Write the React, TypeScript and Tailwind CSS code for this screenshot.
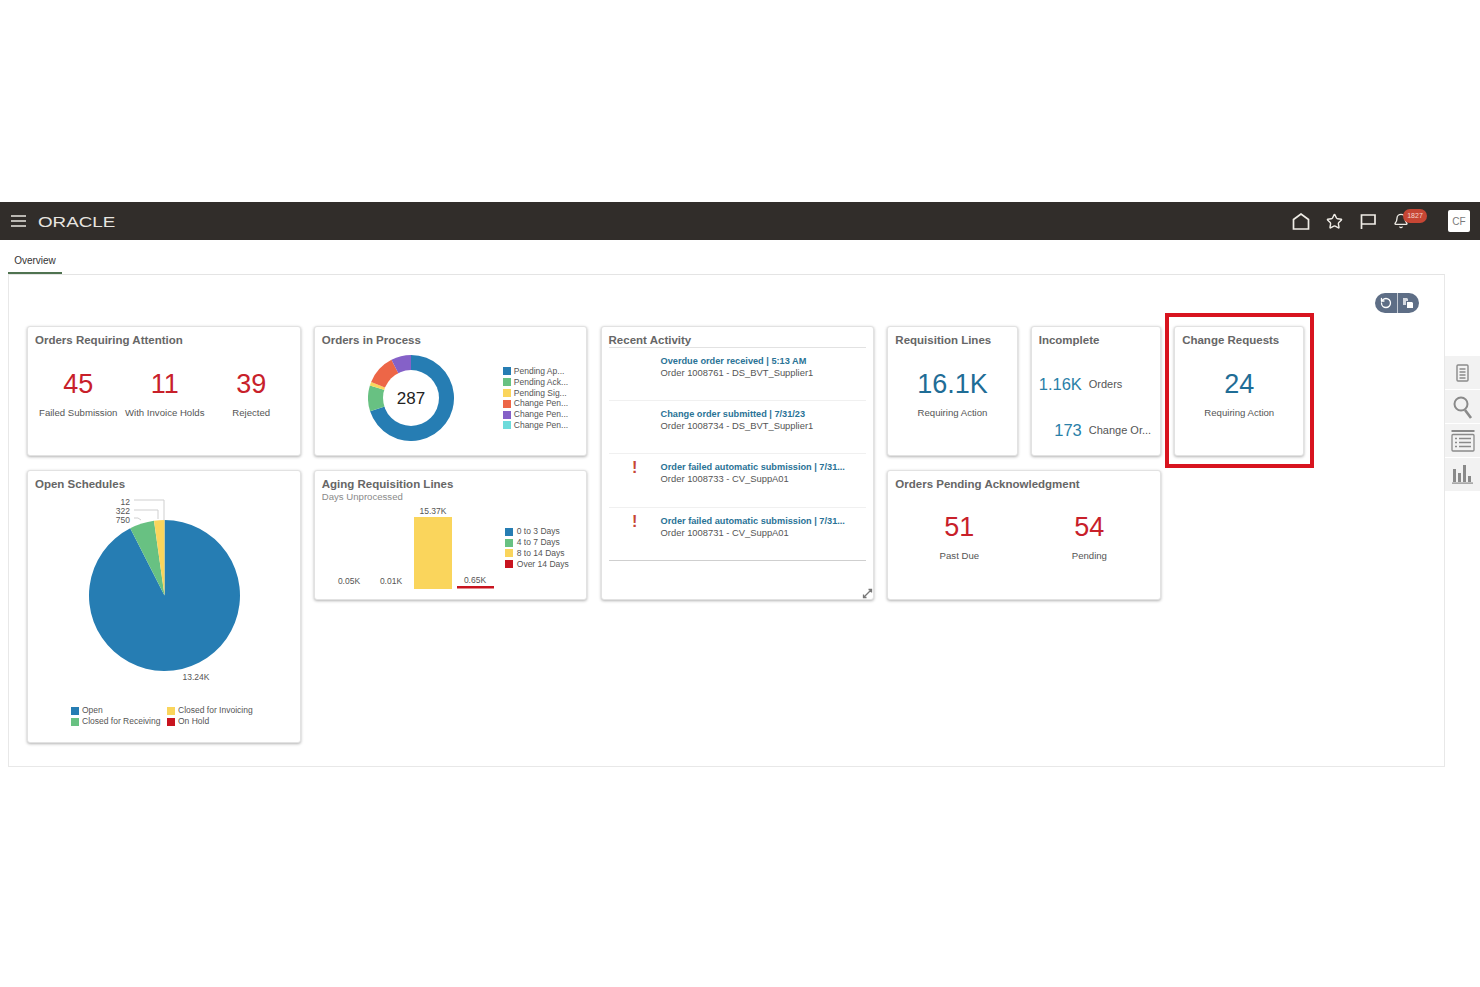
import React from "react";
import { Star, Bell, RotateCw } from "lucide-react";

function polar(cx: number, cy: number, r: number, a: number) {
  const t = ((a - 90) * Math.PI) / 180;
  return [cx + r * Math.cos(t), cy + r * Math.sin(t)];
}
function sector(cx: number, cy: number, r: number, a0: number, a1: number) {
  const [x0, y0] = polar(cx, cy, r, a0);
  const [x1, y1] = polar(cx, cy, r, a1);
  const large = a1 - a0 > 180 ? 1 : 0;
  return `M${cx} ${cy}L${x0} ${y0}A${r} ${r} 0 ${large} 1 ${x1} ${y1}Z`;
}

function Card({ title, subtitle, className, children }: { title: string; subtitle?: string; className?: string; children?: React.ReactNode }) {
  return (
    <div className={`flex flex-col rounded-[3px] border border-[#e2e2e2] bg-white shadow-[0_1px_3px_rgba(0,0,0,0.3)] ${className ?? ""}`}>
      <div className="whitespace-nowrap px-[7px] pt-[6px] text-[11.5px] font-bold leading-[14px] text-[#666666]">{title}</div>
      {subtitle && <div className="mt-[1px] px-[7px] text-[9.6px] leading-[10px] text-[#8a8a8a]">{subtitle}</div>}
      {children}
    </div>
  );
}

function Metric({ value, label, tone }: { value: string; label: string; tone: string }) {
  return (
    <div className="flex flex-col items-center">
      <div className={`text-[27px] leading-[32px] ${tone}`}>{value}</div>
      <div className="mt-[7px] whitespace-nowrap text-[9.6px] leading-[12px] text-[#555555]">{label}</div>
    </div>
  );
}

function Legend({ items, className, gap }: { items: [string, string][]; className?: string; gap?: string }) {
  return (
    <div className={`flex flex-col ${className ?? ""}`}>
      {items.map(([c, t], i) => (
        <div key={i} className={`flex h-[10.8px] items-center text-[8.5px] leading-[11px] text-[#555555] ${gap ?? "gap-[3px]"}`}>
          <span className="h-[8px] w-[8px] shrink-0" style={{ backgroundColor: c }} />
          <span className="whitespace-nowrap">{t}</span>
        </div>
      ))}
    </div>
  );
}

function Activity({ title, sub, alert, last }: { title: string; sub: string; alert?: boolean; last?: boolean }) {
  return (
    <div className={`flex h-[53.2px] border-b ${last ? "border-[#cfcfcf]" : "border-[#f0f0f0]"}`}>
      <div className="w-[52px] pt-[6px] text-center text-[16px] font-bold leading-[16px] text-[#c74634]">{alert ? "!" : ""}</div>
      <div className="pt-[7px]">
        <div className="whitespace-nowrap text-[9.2px] font-bold leading-[12px] text-[#2a7396]">{title}</div>
        <div className="whitespace-nowrap text-[9.4px] leading-[12px] text-[#555555]">{sub}</div>
      </div>
    </div>
  );
}

const BLUE = "#267db3";
const GREEN = "#68c182";
const YELLOW = "#fad55c";
const ORANGE = "#ed6647";
const PURPLE = "#8561c8";
const TEAL = "#6ddbdb";
const RED = "#c8141f";

export default function App() {
  return (
    <div className="min-h-[987px] bg-white pt-[202px] font-['Liberation_Sans',Arial,sans-serif]">
      <header className="flex h-[38px] items-center bg-[#312d2a] text-[#f0ede8]">
        <svg width="16" height="12" viewBox="0 0 16 12" className="ml-[11px]" stroke="#e8e5e0" strokeWidth="1.4">
          <path d="M0 1h15M0 6h15M0 11h15" />
        </svg>
        <span className="ml-[11px] mt-[1px] w-[57px] origin-left scale-x-[1.34] text-[14px] leading-[14px] text-[#e8e5e0]">ORACLE</span>
        <div className="ml-auto flex items-center">
          <svg width="18" height="17" viewBox="0 0 18 17" fill="none" stroke="#efece6" strokeWidth="1.7">
            <path d="M1.5 16V6.5L9 1l7.5 5.5V16Z" />
          </svg>
          <Star size={17} strokeWidth={2} className="ml-[16px]" color="#efece6" />
          <svg width="16" height="15" viewBox="0 0 16 15" fill="none" stroke="#efece6" strokeWidth="1.7" className="ml-[17px]">
            <path d="M1.5 15V1h13.5v9H1.5" />
          </svg>
          <div className="relative ml-[17px] h-[16px] w-[16px]">
            <Bell size={16} strokeWidth={2} color="#efece6" />
            <span className="absolute left-[10px] top-[-4px] flex h-[14px] w-[24px] items-center justify-center rounded-[7px] bg-[#c74634] text-[7px] leading-[8px] text-[#f5d5cc]">1827</span>
          </div>
          <div className="ml-[39px] mr-[10px] flex h-[22px] w-[22px] items-center justify-center rounded-[2px] bg-white text-[10px] text-[#7a7a7a]">CF</div>
        </div>
      </header>

      <div className="flex h-[34px] items-stretch pl-[8px]">
        <div className="flex w-[54px] items-center justify-center border-b-2 border-[#4f7350] pt-[10px] text-[10px] leading-[12px] text-[#333333]">Overview</div>
      </div>

      <div className="flex items-start">
        <main className="ml-[8px] h-[493px] w-[1437px] border border-[#e8e8e8] border-t-[#e4e4e4] pl-[18px] pt-[18px]">
          <div className="mr-[25px] flex justify-end">
            <div className="flex h-[20px] w-[44px] overflow-hidden rounded-[10px] bg-[#5e6e86]">
              <div className="flex flex-1 items-center justify-center border-r border-[#c5cbd4]">
                <RotateCw size={12} strokeWidth={2.6} color="#ffffff" className="-scale-x-100" />
              </div>
              <div className="flex flex-1 items-center justify-center">
                <svg width="12" height="12" viewBox="0 0 12 12" fill="#ffffff">
                  <path d="M1 1h4l1 1v2H4v4H1Z" opacity="0.75" />
                  <path d="M5 5h5l1 1v5H5Z" />
                </svg>
              </div>
            </div>
          </div>

          <div className="relative mt-[13px] grid grid-cols-[repeat(9,130.3px)] grid-rows-[130px_130px_130px] gap-x-[13.1px] gap-y-[13.5px]">
            <Card title="Orders Requiring Attention" className="col-span-2">
              <div className="mt-[21px] grid grid-cols-[repeat(3,86.5px)] px-[7px]">
                <Metric value="45" label="Failed Submission" tone="text-[#c8202a]" />
                <Metric value="11" label="With Invoice Holds" tone="text-[#c8202a]" />
                <Metric value="39" label="Rejected" tone="text-[#c8202a]" />
              </div>
            </Card>

            <Card title="Orders in Process" className="col-span-2">
              <div className="mt-[8px] flex pl-[53px]">
                <svg width="86" height="86" viewBox="0 0 86 86" className="shrink-0">
                  <path d={sector(43, 43, 43, 0, 252)} fill={BLUE} />
                  <path d={sector(43, 43, 43, 252, 287)} fill={GREEN} />
                  <path d={sector(43, 43, 43, 287, 292)} fill={YELLOW} />
                  <path d={sector(43, 43, 43, 292, 333)} fill={ORANGE} />
                  <path d={sector(43, 43, 43, 333, 360)} fill={PURPLE} />
                  <circle cx="43" cy="43" r="28" fill="#ffffff" />
                  <text x="43" y="49" textAnchor="middle" fontSize="17" fill="#222222">287</text>
                </svg>
                <Legend
                  className="ml-[49px] mt-[11px]"
                  items={[
                    [BLUE, "Pending Ap..."],
                    [GREEN, "Pending Ack..."],
                    [YELLOW, "Pending Sig..."],
                    [ORANGE, "Change Pen..."],
                    [PURPLE, "Change Pen..."],
                    [TEAL, "Change Pen..."],
                  ]}
                />
              </div>
            </Card>

            <Card title="Recent Activity" className="col-span-2 row-span-2">
              <div className="relative mx-[7px] flex flex-1 flex-col border-t border-[#e2e2e2]">
                <Activity title="Overdue order received | 5:13 AM" sub="Order 1008761 - DS_BVT_Supplier1" />
                <Activity title="Change order submitted | 7/31/23" sub="Order 1008734 - DS_BVT_Supplier1" />
                <Activity alert title="Order failed automatic submission | 7/31..." sub="Order 1008733 - CV_SuppA01" />
                <Activity alert last title="Order failed automatic submission | 7/31..." sub="Order 1008731 - CV_SuppA01" />
                <svg width="11" height="11" viewBox="0 0 11 11" fill="none" stroke="#777777" strokeWidth="1.3" className="absolute bottom-[0px] right-[-7px]">
                  <path d="M1.5 9.5l8-8M6.5 1.5h3v3M1.5 6.5v3h3" />
                </svg>
              </div>
            </Card>

            <Card title="Requisition Lines">
              <div className="mt-[21px]">
                <Metric value="16.1K" label="Requiring Action" tone="text-[#1f6d96]" />
              </div>
            </Card>

            <Card title="Incomplete">
              <div className="mt-[21px] grid grid-cols-[43px_auto] items-center gap-x-[7px] gap-y-[24px] pl-[7px] pt-[5px]">
                <div className="text-right text-[16.5px] leading-[22px] text-[#2a7fa8]">1.16K</div>
                <div className="text-[11px] text-[#555555]">Orders</div>
                <div className="text-right text-[16.5px] leading-[22px] text-[#2a7fa8]">173</div>
                <div className="whitespace-nowrap text-[11px] text-[#555555]">Change Or...</div>
              </div>
            </Card>

            <Card title="Change Requests">
              <div className="mt-[21px]">
                <Metric value="24" label="Requiring Action" tone="text-[#1f6d96]" />
              </div>
            </Card>

            <Card title="Open Schedules" className="col-span-2 row-span-2">
              <svg viewBox="28 491 272 195" width="272" height="195" className="block">
                <path d={sector(164.5, 595.5, 75.5, 0, 333)} fill={BLUE} />
                <path d={sector(164.5, 595.5, 75.5, 333, 352)} fill={GREEN} />
                <path d={sector(164.5, 595.5, 75.5, 352, 360)} fill={YELLOW} />
                <path d="M134 518h4l3 2M134 510h24v9M134 500h30v20" fill="none" stroke="#cfcfcf" strokeWidth="1" />
                <text x="130" y="504.5" textAnchor="end" fontSize="8.5" fill="#555555">12</text>
                <text x="130" y="513.5" textAnchor="end" fontSize="8.5" fill="#555555">322</text>
                <text x="130" y="522.5" textAnchor="end" fontSize="8.5" fill="#555555">750</text>
                <text x="196" y="680" textAnchor="middle" fontSize="8.5" fill="#555555">13.24K</text>
              </svg>
              <div className="mt-[20px] grid grid-cols-[96px_auto] pl-[43px]">
                <Legend items={[[BLUE, "Open"], [GREEN, "Closed for Receiving"]]} />
                <Legend items={[[YELLOW, "Closed for Invoicing"], [RED, "On Hold"]]} />
              </div>
            </Card>

            <Card title="Aging Requisition Lines" subtitle="Days Unprocessed" className="col-span-2">
              <div className="flex">
                <svg viewBox="315 502 180 91" width="180" height="91" className="block shrink-0">
                  <rect x="414" y="517" width="38" height="72" fill={YELLOW} />
                  <rect x="457" y="586" width="37" height="2.5" fill={RED} />
                  <text x="433" y="514" textAnchor="middle" fontSize="8.5" fill="#555555">15.37K</text>
                  <text x="349" y="584" textAnchor="middle" fontSize="8.5" fill="#555555">0.05K</text>
                  <text x="391" y="584" textAnchor="middle" fontSize="8.5" fill="#555555">0.01K</text>
                  <text x="475" y="583" textAnchor="middle" fontSize="8.5" fill="#555555">0.65K</text>
                </svg>
                <Legend
                  className="ml-[10px] mt-[25px]"
                  gap="gap-[4px]"
                  items={[
                    [BLUE, "0 to 3 Days"],
                    [GREEN, "4 to 7 Days"],
                    [YELLOW, "8 to 14 Days"],
                    [RED, "Over 14 Days"],
                  ]}
                />
              </div>
            </Card>

            <Card title="Orders Pending Acknowledgment" className="col-span-2 col-start-7 row-start-2">
              <div className="mt-[20px] grid grid-cols-[130px_130px] px-[6px]">
                <Metric value="51" label="Past Due" tone="text-[#c8202a]" />
                <Metric value="54" label="Pending" tone="text-[#c8202a]" />
              </div>
            </Card>

            <div className="absolute left-[1138px] top-[-13px] h-[155px] w-[149px] border-[4px] border-[#d8141f]" />
          </div>
        </main>

        <aside className="mt-[82px] flex flex-1 flex-col gap-[1px]">
          <div className="flex h-[33px] items-center justify-center bg-[#f2f2f2]">
            <svg width="13" height="18" viewBox="0 0 13 18" fill="none" stroke="#8a8a8a" strokeWidth="1.4">
              <rect x="1" y="1" width="11" height="16" rx="1" />
              <path d="M3.5 5h6M3.5 8h6M3.5 11h6M3.5 14h6" />
            </svg>
          </div>
          <div className="flex h-[33px] items-center justify-center bg-[#f2f2f2]">
            <svg width="20" height="24" viewBox="0 0 20 24" fill="none" stroke="#8a8a8a" strokeWidth="2">
              <circle cx="8" cy="9" r="6.5" />
              <path d="M12 15l6 8" strokeWidth="2.6" />
            </svg>
          </div>
          <div className="flex h-[33px] items-center justify-center bg-[#f2f2f2]">
            <svg width="24" height="22" viewBox="0 0 24 22" fill="none" stroke="#8a8a8a" strokeWidth="1.3">
              <path d="M0.5 1h23" strokeWidth="2" />
              <rect x="1" y="4.5" width="22" height="16.5" rx="1" />
              <path d="M4 8.5h2M8 8.5h12M4 12.5h2M8 12.5h12M4 16.5h2M8 16.5h12" />
            </svg>
          </div>
          <div className="flex h-[33px] items-center justify-center bg-[#f2f2f2] pb-[2px]">
            <svg width="21" height="20" viewBox="0 0 21 20" fill="#8a8a8a">
              <rect x="1" y="5" width="3" height="13" />
              <rect x="6" y="9" width="3" height="9" />
              <rect x="11" y="1" width="3" height="17" />
              <rect x="16" y="12" width="3" height="6" />
              <rect x="0" y="18.5" width="21" height="1.2" />
            </svg>
          </div>
        </aside>
      </div>
    </div>
  );
}
